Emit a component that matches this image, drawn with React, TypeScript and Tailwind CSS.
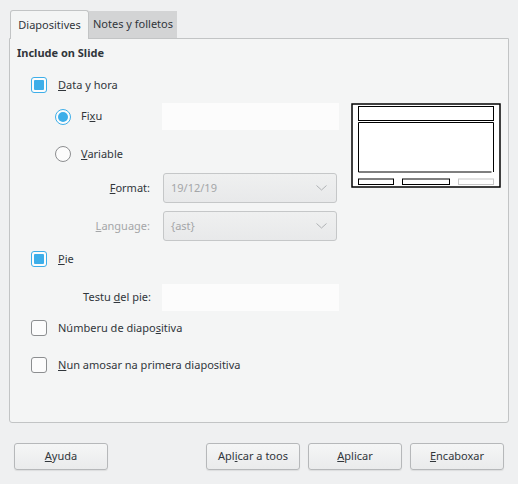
import React from 'react';

const font = { fontFamily: '"Noto Sans", "Open Sans", sans-serif' };

const Check = ({ checked }: { checked: boolean }) => (
    <span
        className={`flex h-[16px] w-[16px] shrink-0 items-center justify-center rounded-[3px] border bg-[#fcfcfc] ${
            checked ? 'border-[#3daee9]' : 'border-[#8c8e90]'
        }`}
    >
        {checked && <span className="h-[10px] w-[10px] rounded-[1px] bg-[#3daee9]" />}
    </span>
);

const Radio = ({ checked }: { checked: boolean }) => (
    <span
        className={`flex h-[16px] w-[16px] shrink-0 items-center justify-center rounded-full border bg-[#fcfcfc] ${
            checked ? 'border-[#3daee9]' : 'border-[#8c8e90]'
        }`}
    >
        {checked && <span className="h-[10px] w-[10px] rounded-full bg-[#3daee9]" />}
    </span>
);

const Combo = ({ value }: { value: string }) => (
    <div className="ml-[13px] flex h-[30px] w-[174px] items-center justify-between rounded-[3px] border border-[#c5c7c8] bg-gradient-to-b from-[#eff0f0] to-[#e8e9ea] pl-[7px] pr-[9px] text-[#a4a6a8]">
        <span>{value}</span>
        <svg width="11" height="6" viewBox="0 0 11 6" fill="none">
            <path d="M0.5 0.5 L5.5 5 L10.5 0.5" stroke="#b0b2b4" strokeWidth="1" />
        </svg>
    </div>
);

const Button = ({ children, className = '' }: { children: React.ReactNode; className?: string }) => (
    <button
        className={`flex h-[27px] w-[94px] items-center justify-center rounded-[3px] border border-[#b6b8ba] bg-gradient-to-b from-[#f5f6f6] to-[#eaebec] text-[#31363b] shadow-[0_1px_1px_rgba(0,0,0,0.08)] ${className}`}
    >
        {children}
    </button>
);

const Preview = () => (
    <svg width="150" height="85" viewBox="0 0 150 85" className="ml-[12px] shrink-0">
        <rect x="0" y="0" width="150" height="85" fill="#ffffff" />
        <rect x="1" y="1" width="148" height="83" fill="none" stroke="#000" strokeWidth="1.5" />
        <rect x="7.5" y="3.5" width="135" height="14" fill="none" stroke="#000" strokeWidth="1" />
        <path d="M7.5 69 V19.5 H142.5 V69 M7.5 69 H140.5" fill="none" stroke="#000" strokeWidth="1" />
        <rect x="7.5" y="76" width="35" height="5.5" fill="none" stroke="#000" strokeWidth="1" />
        <rect x="51.5" y="76" width="47" height="5.5" fill="none" stroke="#000" strokeWidth="1" />
        <rect x="107.5" y="76" width="35" height="5.5" fill="none" stroke="#c8c8c8" strokeWidth="1" />
    </svg>
);

export default function App() {
    return (
        <div style={font} className="flex h-[484px] w-[518px] flex-col bg-[#eff0f1] text-[11px] text-[#31363b]">
            {/* tabs */}
            <div className="flex whitespace-nowrap pl-[10px] pt-[10px]">
                <div className="relative z-10 -mb-px flex h-[29px] w-[79px] items-center justify-center rounded-t-[3px] border border-b-0 border-[#c2c4c5] bg-[#f4f5f5]">
                    Diapositives
                </div>
                <div className="mt-px flex h-[27px] w-[88px] items-center justify-center bg-[#d3d4d5]">
                    Notes y folletos
                </div>
            </div>

            {/* panel */}
            <div className="mx-[9px] flex h-[385px] flex-col rounded-b-[3px] border border-[#c2c4c5] bg-[#f4f5f5]">
                <div className="mt-[5px] flex h-[18px] items-center pl-[7px] font-bold">Include on Slide</div>

                <div className="mt-[15px] flex h-[16px] items-center pl-[21px]">
                    <Check checked />
                    <span className="ml-[11px]">
                        <u>D</u>ata y hora
                    </span>
                </div>

                <div className="mt-[10px] flex items-start">
                    <div className="flex w-[329px] shrink-0 flex-col">
                        <div className="flex h-[27px] items-center">
                            <div className="flex w-[152px] items-center pl-[45px]">
                                <Radio checked />
                                <span className="ml-[10px]">
                                    Fi<u>x</u>u
                                </span>
                            </div>
                            <div className="h-[27px] w-[177px] bg-[#fcfcfc]" />
                        </div>

                        <div className="mt-[16px] flex h-[16px] items-center pl-[45px]">
                            <Radio checked={false} />
                            <span className="ml-[10px]">
                                <u>V</u>ariable
                            </span>
                        </div>

                        <div className="mt-[11px] flex h-[30px] items-center">
                            <div className="w-[140px] text-right">
                                <u>F</u>ormat:
                            </div>
                            <Combo value="19/12/19" />
                        </div>

                        <div className="mt-[8px] flex h-[30px] items-center">
                            <div className="w-[140px] text-right text-[#a4a6a8]">
                                <u>L</u>anguage:
                            </div>
                            <Combo value="{ast}" />
                        </div>
                    </div>
                    <Preview />
                </div>

                <div className="mt-[10px] flex h-[16px] items-center pl-[21px]">
                    <Check checked />
                    <span className="ml-[11px]">
                        <u>P</u>ie
                    </span>
                </div>

                <div className="mt-[17px] flex h-[27px] items-center">
                    <div className="w-[141px] text-right">
                        Testu <u>d</u>el pie:
                    </div>
                    <div className="ml-[11px] h-[27px] w-[177px] bg-[#fcfcfc]" />
                </div>

                <div className="mt-[9px] flex h-[16px] items-center pl-[21px]">
                    <Check checked={false} />
                    <span className="ml-[11px]">
                        Númberu de diapo<u>s</u>itiva
                    </span>
                </div>

                <div className="mt-[21px] flex h-[16px] items-center pl-[21px]">
                    <Check checked={false} />
                    <span className="ml-[11px]">
                        <u>N</u>un amosar na primera diapositiva
                    </span>
                </div>
            </div>

            {/* buttons */}
            <div className="mt-[20px] flex items-center px-[14px]">
                <Button>
                    <u>A</u>yuda
                </Button>
                <div className="flex-1" />
                <Button>
                    Apl<u>i</u>car a toos
                </Button>
                <Button className="ml-[8px]">
                    <u>A</u>plicar
                </Button>
                <Button className="ml-[8px]">
                    <u>E</u>ncaboxar
                </Button>
            </div>
        </div>
    );
}
